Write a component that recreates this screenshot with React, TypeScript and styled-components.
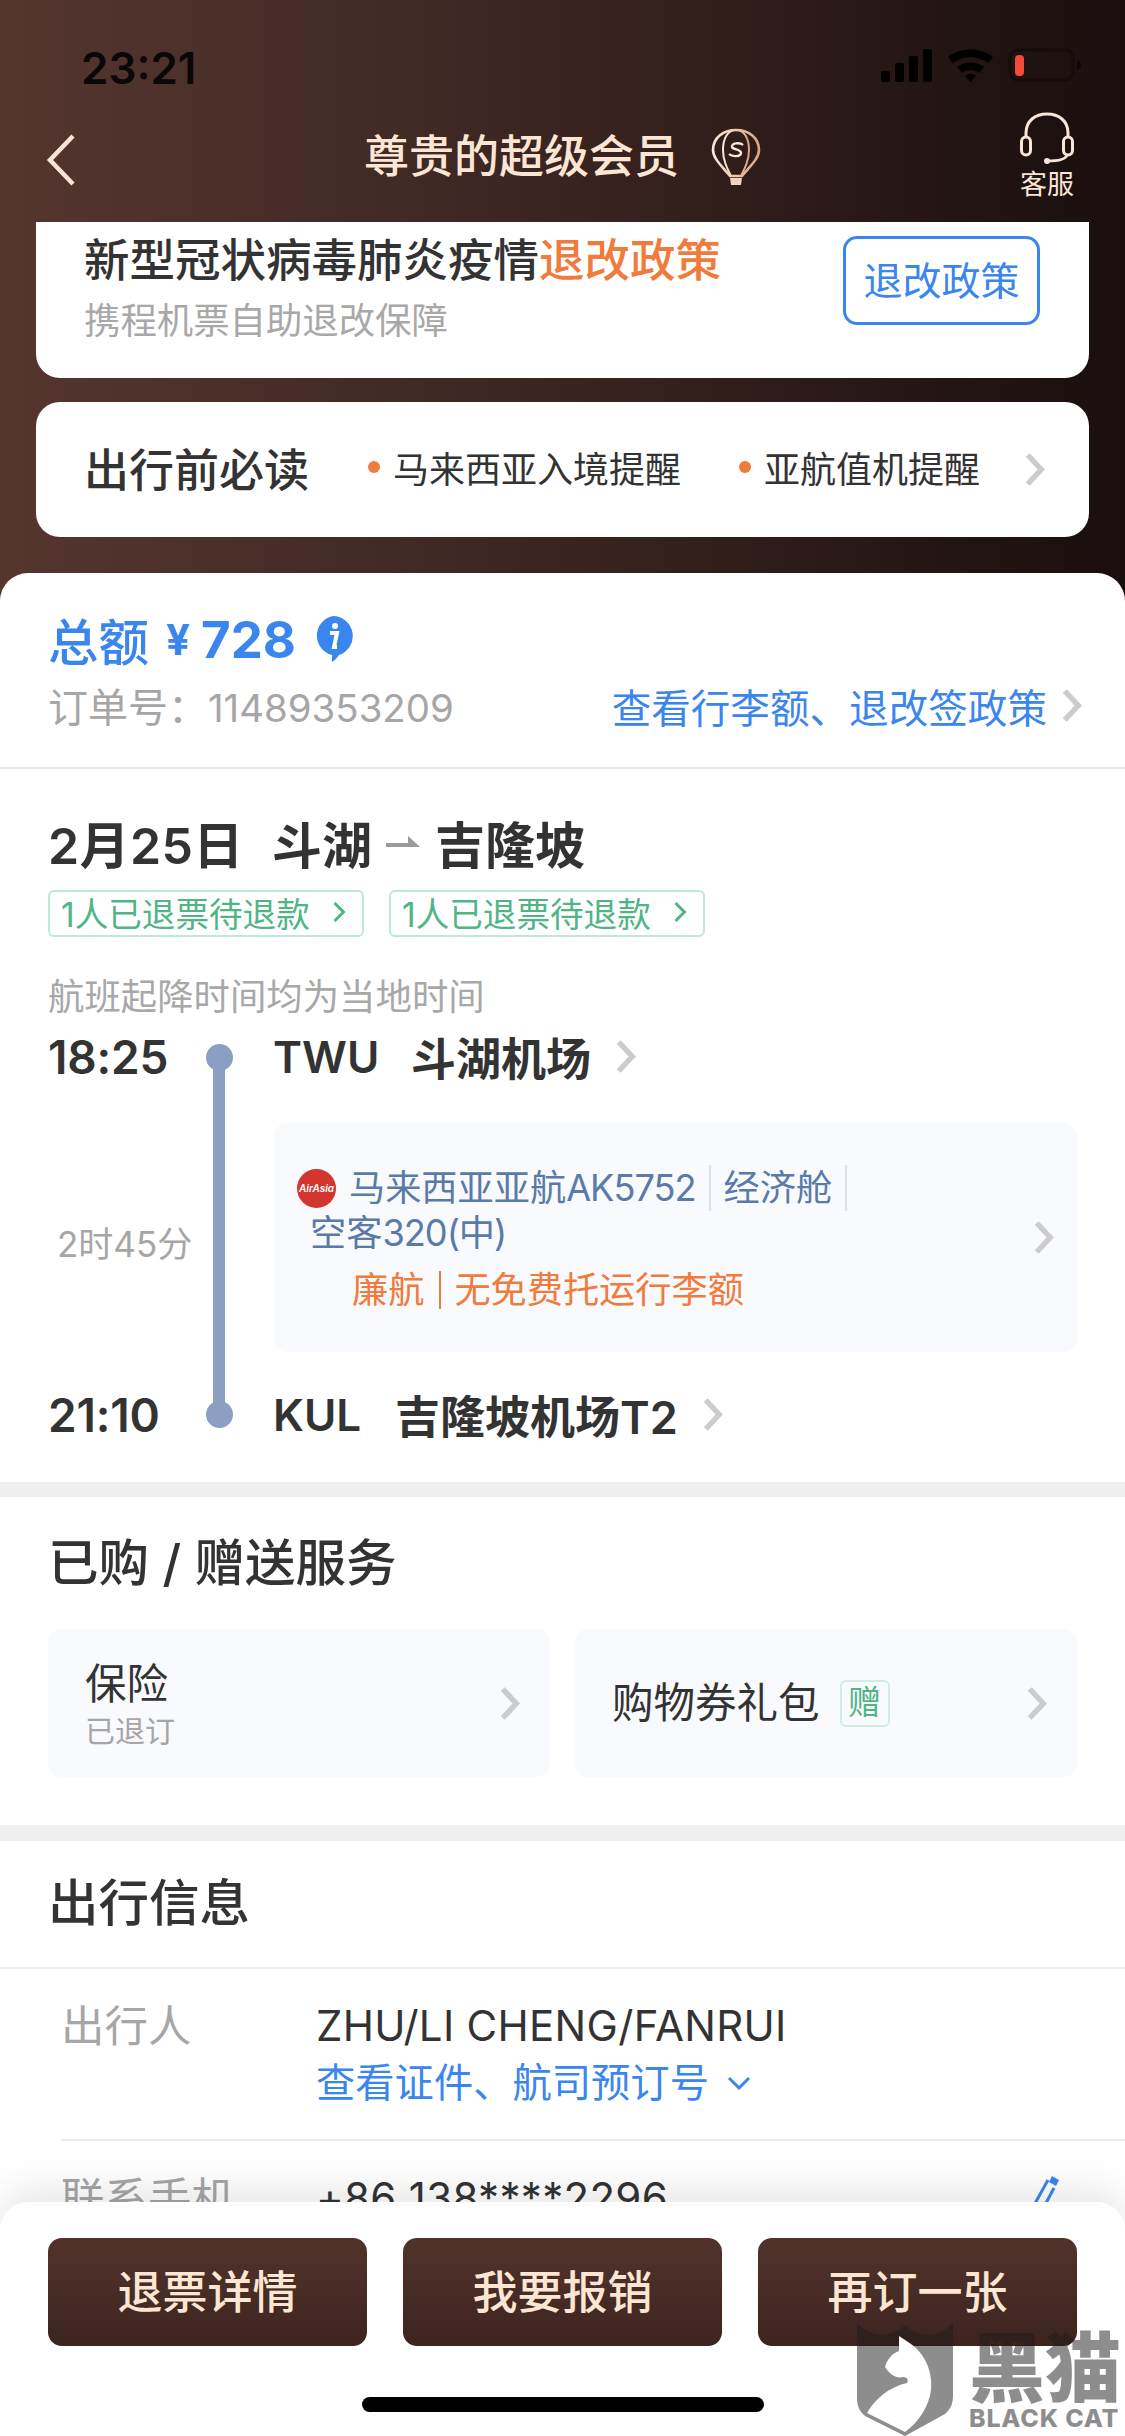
import React from "react";
import styled, { createGlobalStyle } from "styled-components";

const Global = createGlobalStyle`
  html, body { margin: 0; padding: 0; background: #fff; }
  * { box-sizing: border-box; }
  body { font-family: Inter, "Noto Sans CJK SC", sans-serif; color: #333; }
`;

const Page = styled.div`
  position: relative;
  width: 1125px;
  height: 2436px;
  overflow: hidden;
  background: linear-gradient(90deg, #55362f 0%, #3a2420 50%, #190e0e 100%) top / 100% 620px no-repeat, #fff;
`;
const StatusBar = styled.div`
  height: 100px;
  padding: 38px 43px 0 81px;
  display: flex;
  justify-content: space-between;
  align-items: flex-start;
`;
const Clock = styled.div`
  font-size: 44px;
  line-height: 60px;
  font-weight: 600;
  color: #0a0707;
  width: 122px;
`;
const StatusIcons = styled.svg`
  width: 201px;
  height: 50px;
  margin-top: 10px;
`;
const Nav = styled.div`
  height: 122px;
  padding: 12px 51px 0 46px;
  display: flex;
  align-items: flex-start;
  color: #fbe6d6;
`;
const BackIcon = styled.svg`
  width: 30px;
  height: 52px;
  margin-top: 22px;
`;
const NavCenter = styled.div`
  display: flex;
  align-items: center;
  gap: 32px;
  height: 70px;
  margin: 10px 0 0 288px;
`;
const NavTitle = styled.div`
  font-size: 45px;
  line-height: 70px;
  font-weight: 500;
  white-space: nowrap;
`;
const Support = styled.div`
  display: flex;
  flex-direction: column;
  align-items: center;
  width: 54px;
  margin-left: auto;
  font-size: 27px;
  line-height: 42px;
  white-space: nowrap;
`;
const Hero = styled.div`
  padding: 0 36px;
  display: flex;
  flex-direction: column;
  gap: 24px;
`;
const PolicyCard = styled.div`
  height: 156px;
  background: #fff;
  border-radius: 0 0 24px 24px;
  padding: 0 49px 0 48px;
  display: flex;
  justify-content: space-between;
  align-items: flex-start;
`;
const PolicyTitle = styled.div`
  font-size: 45.5px;
  line-height: 60px;
  margin-top: 9px;
  font-weight: 500;
  white-space: nowrap;
`;
const Orange = styled.span`
  color: #f07b3c;
`;
const PolicySub = styled.div`
  font-size: 36.4px;
  line-height: 50px;
  color: #a8a8a8;
  margin-top: 5px;
  white-space: nowrap;
`;
const PolicyButton = styled.div`
  width: 197px;
  height: 89px;
  margin-top: 14px;
  padding-bottom: 5px;
  border: 3px solid #3b86ee;
  border-radius: 14px;
  color: #3b86ee;
  font-size: 39px;
  display: flex;
  align-items: center;
  justify-content: center;
  white-space: nowrap;
`;
const NoticeCard = styled.div`
  height: 135px;
  background: #fff;
  border-radius: 24px;
  padding: 0 40px 0 48px;
  display: flex;
  align-items: center;
`;
const NoticeTitle = styled.div`
  font-size: 45px;
  font-weight: 500;
  width: 284px;
  padding-bottom: 5px;
  white-space: nowrap;
`;
const NoticeItem = styled.div<{ $w: number }>`
  width: ${(p) => p.$w}px;
  font-size: 36px;
  color: #333;
  display: flex;
  align-items: center;
  gap: 13px;
  padding-bottom: 5px;
  white-space: nowrap;
  &::before {
    content: "";
    width: 12px;
    height: 12px;
    border-radius: 50%;
    background: #f07b3c;
  }
`;
const ChevronSvg = styled.svg<{ $ml?: number }>`
  flex: none;
  margin-left: ${(p) => p.$ml ?? 0}px;
`;
const Sheet = styled.div`
  margin-top: 36px;
  background: #fff;
  border-radius: 28px 28px 0 0;
`;
const Summary = styled.div`
  height: 196px;
  padding: 36px 43px 0 48px;
  border-bottom: 2px solid #e9e9e9;
`;
const TotalRow = styled.div`
  height: 60px;
  display: flex;
  align-items: center;
  color: #3b86ee;
  font-size: 50px;
  font-weight: 600;
`;
const TotalLabel = styled.span`
  font-weight: 500;
  font-size: 50.5px;
  width: 118px;
`;
const Yen = styled.span`
  font-size: 42px;
  font-weight: 700;
  width: 35px;
`;
const Amount = styled.span`
  width: 105px;
  font-size: 51px;
  font-weight: 700;
`;
const InfoBadge = styled.svg`
  width: 42px;
  height: 48px;
  margin-left: 6px;
  flex: none;
`;
const OrderRow = styled.div`
  height: 50px;
  margin-top: 11px;
  display: flex;
  align-items: center;
  justify-content: space-between;
`;
const OrderNo = styled.div`
  font-size: 38.4px;
  color: #a6a6a6;
  white-space: nowrap;
`;
const OrderLabel = styled.span`
  font-size: 40px;
`;
const LinkText = styled.div`
  font-size: 39.6px;
  color: #3b86ee;
  white-space: nowrap;
  display: flex;
  align-items: center;
`;
const Flight = styled.div`
  padding: 41px 48px 37px 48px;
`;
const RouteTitle = styled.div`
  height: 63px;
  display: flex;
  align-items: center;
  font-size: 50px;
  font-weight: 600;
  white-space: nowrap;
`;
const RouteDate = styled.span`
  width: 224px;
  letter-spacing: 0.4px;
`;
const RouteArrow = styled.svg`
  width: 34px;
  height: 14px;
  margin: 3px 15px 0 14px;
`;
const Tags = styled.div`
  display: flex;
  gap: 25px;
  margin-top: 17px;
`;
const Tag = styled.div`
  width: 316px;
  height: 47px;
  border: 2px solid #bfe8d5;
  border-radius: 6px;
  padding: 0 16px 3px 11px;
  display: flex;
  align-items: center;
  justify-content: space-between;
  font-size: 33.6px;
  color: #4fb585;
  white-space: nowrap;
`;
const Note = styled.div`
  margin-top: 35px;
  font-size: 36.4px;
  line-height: 50px;
  color: #a8a8a8;
`;
const Timeline = styled.div`
  margin-top: 5px;
  display: grid;
  grid-template-columns: 145px 52px 1fr;
  grid-template-rows: 60px auto 60px;
`;
const TimeText = styled.div`
  font-size: 46px;
  font-weight: 600;
  line-height: 60px;
  letter-spacing: -0.2px;
`;
const Rail = styled.div`
  grid-column: 2;
  grid-row: 1 / 4;
  display: flex;
  flex-direction: column;
  align-items: center;
  padding: 17px 0;
`;
const RailDot = styled.div`
  width: 27px;
  height: 27px;
  flex: none;
  border-radius: 50%;
  background: #8a9fc2;
`;
const RailLine = styled.div`
  flex: 1;
  width: 12px;
  background: #8a9fc2;
  margin: -3px 0;
`;
const Airport = styled.div`
  grid-column: 3;
  padding: 0 0 2px 28px;
  display: flex;
  align-items: center;
  font-size: 45px;
  font-weight: 600;
  white-space: nowrap;
`;
const Code = styled.span<{ $w: number }>`
  width: ${(p) => p.$w}px;
  font-size: 44px;
  padding-top: 2px;
`;
const Duration = styled.div`
  grid-column: 1;
  grid-row: 2;
  align-self: center;
  padding: 10px 0 0 9px;
  font-size: 35px;
  color: #a6a6a6;
  white-space: nowrap;
`;
const SegmentWrap = styled.div`
  grid-column: 3;
  grid-row: 2;
  padding: 36px 0 33px 29px;
`;
const Segment = styled.div`
  height: 229px;
  background: #f9fafe;
  border-radius: 14px;
  padding: 0 23px;
  display: flex;
  align-items: center;
  justify-content: space-between;
`;
const SegmentBody = styled.div`
  align-self: flex-start;
  margin-top: 42px;
  font-size: 36.2px;
  line-height: 45px;
  color: #5a7aa8;
  width: 640px;
`;
const SegmentLine = styled.div`
  display: flex;
  align-items: center;
  white-space: nowrap;
`;
const LatinTight = styled.span`
  letter-spacing: -1px;
`;
const LogoSvg = styled.svg`
  width: 39px;
  height: 39px;
  margin-right: 13px;
  flex: none;
`;
const Pipe = styled.span`
  width: 2px;
  height: 46px;
  margin: 0 13px;
  background: #dde1e8;
`;
const Plane = styled.div`
  padding-left: 13px;
`;
const LowCost = styled.div`
  margin: 9px 0 0 55px;
  color: #f07b3c;
  white-space: nowrap;
  line-height: 50px;
  display: flex;
  align-items: center;
`;
const LowCostPipe = styled.span`
  width: 2px;
  height: 38px;
  margin: 0 13px 0 15px;
  background: #f07b3c;
`;
const Band = styled.div<{ $h: number }>`
  height: ${(p) => p.$h}px;
  background: #f0f0f0;
`;
const Services = styled.div`
  padding: 36px 48px 48px 48px;
`;
const SectionTitle = styled.div`
  font-size: 50.5px;
  line-height: 60px;
  font-weight: 500;
  white-space: nowrap;
`;
const ServiceGrid = styled.div`
  margin-top: 36px;
  display: grid;
  grid-template-columns: 502px 502px;
  gap: 25px;
`;
const ServiceCard = styled.div`
  height: 148px;
  background: #f9fafe;
  border-radius: 14px;
  padding: 0 30px 0 37px;
  display: flex;
  align-items: center;
  justify-content: space-between;
`;
const ServiceName = styled.div`
  font-size: 41.5px;
  line-height: 56px;
  display: flex;
  align-items: center;
`;
const ServiceSub = styled.div`
  font-size: 30px;
  line-height: 38px;
  color: #a6a6a6;
`;
const Gift = styled.span`
  width: 50px;
  height: 47px;
  margin-left: 20px;
  padding-bottom: 3px;
  border: 2px solid #cfeee0;
  border-radius: 6px;
  color: #4fb585;
  font-size: 33px;
  display: flex;
  align-items: center;
  justify-content: center;
`;
const TravelHead = styled.div`
  padding: 32px 48px 34px 48px;
  border-bottom: 2px solid #efefef;
`;
const InfoRow = styled.div<{ $divider?: boolean }>`
  margin-left: 61px;
  padding: ${(p) => (p.$divider ? "27px 0 29px" : "27px 65px 0 0")};
  display: grid;
  grid-template-columns: 255px 1fr auto;
  border-bottom: ${(p) => (p.$divider ? "2px solid #efefef" : "none")};
`;
const InfoLabel = styled.div`
  font-size: 43.5px;
  line-height: 60px;
  color: #a6a6a6;
`;
const InfoValue = styled.div`
  font-size: 42px;
  line-height: 60px;
  letter-spacing: 0.3px;
  white-space: nowrap;
`;
const InfoLink = styled.div`
  font-size: 39.3px;
  line-height: 54px;
  color: #3b86ee;
  display: flex;
  align-items: center;
  gap: 18px;
`;
const PenIcon = styled.svg`
  width: 36px;
  height: 46px;
  margin-top: 6px;
`;
const BottomBar = styled.div`
  position: absolute;
  left: 0;
  right: 0;
  top: 2202px;
  height: 234px;
  background: #fff;
  border-radius: 28px 28px 0 0;
  box-shadow: 0 -14px 36px rgba(0, 0, 0, 0.09);
  padding: 36px 48px 0 48px;
`;
const Buttons = styled.div`
  display: grid;
  grid-template-columns: repeat(3, 319px);
  justify-content: space-between;
`;
const ActionButton = styled.div`
  height: 108px;
  padding-bottom: 6px;
  border-radius: 14px;
  background: linear-gradient(180deg, #52332c, #3d241f);
  color: #fbe6d4;
  font-size: 45px;
  font-weight: 500;
  display: flex;
  align-items: center;
  justify-content: center;
`;
const HomeBar = styled.div`
  width: 402px;
  height: 15px;
  margin: 51px auto 0;
  border-radius: 8px;
  background: #000;
`;
const Watermark = styled.div`
  position: absolute;
  left: 857px;
  top: 2322px;
  width: 268px;
  height: 114px;
  display: flex;
  color: rgba(30, 28, 28, 0.5);
`;
const Shield = styled.svg`
  width: 96px;
  height: 114px;
  flex: none;
`;
const WatermarkText = styled.div`
  margin-left: 16px;
  display: flex;
  flex-direction: column;
  align-items: flex-start;
  font-weight: 900;
  white-space: nowrap;
`;
const WatermarkCn = styled.div`
  font-size: 76px;
  line-height: 72px;
  padding-top: 10px;
`;
const WatermarkEn = styled.div`
  font-size: 25px;
  line-height: 28px;
  letter-spacing: 0.8px;
  font-weight: 800;
`;

const Chevron = ({ w = 21, h = 33, color = "#cccccc", sw = 5.5, ml }: { w?: number; h?: number; color?: string; sw?: number; ml?: number }) => (
  <ChevronSvg $ml={ml} width={w} height={h} viewBox={`0 0 ${w} ${h}`} fill="none">
    <path d={`M${sw / 2 + 1} 2 L${w - sw / 2 - 1} ${h / 2} L${sw / 2 + 1} ${h - 2}`} stroke={color} strokeWidth={sw} />
  </ChevronSvg>
);

const Balloon = () => (
  <svg width="50" height="58" viewBox="0 0 50 58" fill="none" style={{ flex: "none" }}>
    <defs>
      <linearGradient id="bl" x1="0" x2="1" y1="0" y2="0">
        <stop offset="0" stopColor="#fbe9da" />
        <stop offset="1" stopColor="#dba581" />
      </linearGradient>
    </defs>
    <path d="M25 2C12 2 2 10 2 22c0 9 10 17 17 26h12c7-9 17-17 17-26C48 10 38 2 25 2Z" stroke="url(#bl)" strokeWidth="2.6" />
    <path d="M25 2c-8 0-13 8-13 20 0 10 4 18 8 26M25 2c8 0 13 8 13 20 0 10-4 18-8 26" stroke="url(#bl)" strokeWidth="2" />
    <path d="M32 17c-3-3-12-2-11 2 1 3 9 2 9 6 0 4-9 4-12 1" stroke="#fbe9da" strokeWidth="2.4" />
    <path d="M19 50h12l-1 7h-10z" fill="#f3d3bc" />
  </svg>
);

const Headset = () => (
  <svg width="54" height="52" viewBox="0 0 54 52" fill="none" style={{ flex: "none" }}>
    <path d="M6 26V21C6 9 15 2 27 2s21 7 21 19v5" stroke="#fbe6d6" strokeWidth="3" />
    <rect x="1.500" y="25" width="9" height="18" rx="4.500" stroke="#fbe6d6" strokeWidth="3" />
    <rect x="43.500" y="25" width="9" height="18" rx="4.500" stroke="#fbe6d6" strokeWidth="3" />
    <path d="M47 43c-1 4-6 6-20 6" stroke="#fbe6d6" strokeWidth="3" />
    <circle cx="27" cy="49" r="3" fill="#fbe6d6" />
  </svg>
);

export default function App() {
  return (
    <Page>
      <Global />
      <StatusBar>
        <Clock>23:21</Clock>
        <StatusIcons viewBox="0 0 201 50">
          <rect x="0" y="23" width="9" height="11" rx="2" fill="#000" />
          <rect x="14" y="15" width="9" height="19" rx="2" fill="#000" />
          <rect x="28" y="8" width="9" height="26" rx="2" fill="#000" />
          <rect x="42" y="1" width="9" height="33" rx="2" fill="#000" />
          <path d="M67 9C79-1 100-1 112 9l-5 6C97 7 82 7 72 15Z" fill="#000" />
          <path d="M76 19c8-6 19-6 27 0l-5 6c-5-4-12-4-17 0Z" fill="#000" />
          <path d="M84 28c4-3 7-3 11 0l-5.500 6Z" fill="#000" />
          <rect x="129" y="2" width="63" height="30" rx="8" fill="none" stroke="#140b0b" strokeWidth="3" />
          <path d="M196 12c3 1 4 3 4 5s-1 4-4 5Z" fill="#0c0707" />
          <rect x="134" y="7" width="9" height="21" rx="4" fill="#ee4b39" />
        </StatusIcons>
      </StatusBar>
      <Nav>
        <BackIcon viewBox="0 0 30 52" fill="none">
          <path d="M27 2L4 26l23 24" stroke="#fbe6d6" strokeWidth="4.500" />
        </BackIcon>
        <NavCenter>
          <NavTitle>尊贵的超级会员</NavTitle>
          <Balloon />
        </NavCenter>
        <Support>
          <Headset />
          <span>客服</span>
        </Support>
      </Nav>
      <Hero>
        <PolicyCard>
          <div>
            <PolicyTitle>
              新型冠状病毒肺炎疫情<Orange>退改政策</Orange>
            </PolicyTitle>
            <PolicySub>携程机票自助退改保障</PolicySub>
          </div>
          <PolicyButton>退改政策</PolicyButton>
        </PolicyCard>
        <NoticeCard>
          <NoticeTitle>出行前必读</NoticeTitle>
          <NoticeItem $w={371}>马来西亚入境提醒</NoticeItem>
          <NoticeItem $w={285}>亚航值机提醒</NoticeItem>
          <Chevron />
        </NoticeCard>
      </Hero>
      <Sheet>
        <Summary>
          <TotalRow>
            <TotalLabel>总额</TotalLabel>
            <Yen>¥</Yen>
            <Amount>728</Amount>
            <InfoBadge viewBox="0 0 42 48">
              <path d="M21 1a20 20 0 0 1 6 39c-2 3-4 5-7 7l0-7A20 20 0 0 1 21 1Z" fill="#3b86ee" />
              <circle cx="23" cy="11" r="3" fill="#fff" />
              <path d="M18 18h7l-3 14h3" stroke="#fff" strokeWidth="4" fill="none" />
            </InfoBadge>
          </TotalRow>
          <OrderRow>
            <OrderNo>
              <OrderLabel>订单号：</OrderLabel>11489353209
            </OrderNo>
            <LinkText>
              查看行李额、退改签政策
              <Chevron ml={14} />
            </LinkText>
          </OrderRow>
        </Summary>
        <Flight>
          <RouteTitle>
            <RouteDate>2月25日</RouteDate>
            斗湖
            <RouteArrow viewBox="0 0 34 14">
              <path d="M0 7h22V0l12 11H0Z" fill="#9a9a9a" />
            </RouteArrow>
            吉隆坡
          </RouteTitle>
          <Tags>
            <Tag>
              1人已退票待退款
              <Chevron w={14} h={22} color="#4fb585" sw={3} />
            </Tag>
            <Tag>
              1人已退票待退款
              <Chevron w={14} h={22} color="#4fb585" sw={3} />
            </Tag>
          </Tags>
          <Note>航班起降时间均为当地时间</Note>
          <Timeline>
            <TimeText>18:25</TimeText>
            <Rail>
              <RailDot />
              <RailLine />
              <RailDot />
            </Rail>
            <Airport>
              <Code $w={138}>TWU</Code>
              斗湖机场
              <Chevron ml={24} />
            </Airport>
            <Duration>2时45分</Duration>
            <SegmentWrap>
              <Segment>
                <SegmentBody>
                  <SegmentLine>
                    <LogoSvg viewBox="0 0 39 39">
                      <circle cx="19.500" cy="19.500" r="19.500" fill="#d2352e" />
                      <text x="19.500" y="23" textAnchor="middle" fontSize="10" fontStyle="italic" fontWeight="600" fill="#fff" fontFamily="Inter, sans-serif">AirAsia</text>
                    </LogoSvg>
                    马来西亚亚航<LatinTight>AK5752</LatinTight>
                    <Pipe />
                    经济舱
                    <Pipe />
                  </SegmentLine>
                  <Plane>
                    空客<LatinTight>320(中)</LatinTight>
                  </Plane>
                  <LowCost>
                    廉航
                    <LowCostPipe />
                    无免费托运行李额
                  </LowCost>
                </SegmentBody>
                <Chevron />
              </Segment>
            </SegmentWrap>
            <TimeText>21:10</TimeText>
            <Airport>
              <Code $w={122}>KUL</Code>
              吉隆坡机场T2
              <Chevron ml={24} />
            </Airport>
          </Timeline>
        </Flight>
        <Band $h={15} />
        <Services>
          <SectionTitle>已购 / 赠送服务</SectionTitle>
          <ServiceGrid>
            <ServiceCard>
              <div>
                <ServiceName>保险</ServiceName>
                <ServiceSub>已退订</ServiceSub>
              </div>
              <Chevron />
            </ServiceCard>
            <ServiceCard>
              <ServiceName>
                购物券礼包<Gift>赠</Gift>
              </ServiceName>
              <Chevron />
            </ServiceCard>
          </ServiceGrid>
        </Services>
        <Band $h={16} />
        <TravelHead>
          <SectionTitle>出行信息</SectionTitle>
        </TravelHead>
        <InfoRow $divider>
          <InfoLabel>出行人</InfoLabel>
          <div>
            <InfoValue>ZHU/LI CHENG/FANRUI</InfoValue>
            <InfoLink>
              查看证件、航司预订号
              <svg width="24" height="14" viewBox="0 0 24 14" fill="none">
                <path d="M2 2l10 10L22 2" stroke="#3b86ee" strokeWidth="3" />
              </svg>
            </InfoLink>
          </div>
        </InfoRow>
        <InfoRow>
          <InfoLabel>联系手机</InfoLabel>
          <InfoValue>+86 138****2296</InfoValue>
          <PenIcon viewBox="0 0 36 46" fill="none">
            <path d="M4 42L24 6" stroke="#3b86ee" strokeWidth="3" />
            <path d="M14 44L30 14" stroke="#3b86ee" strokeWidth="3" />
            <path d="M28 2l7 4-3 6-7-4Z" fill="#3b86ee" />
          </PenIcon>
        </InfoRow>
      </Sheet>
      <BottomBar>
        <Buttons>
          <ActionButton>退票详情</ActionButton>
          <ActionButton>我要报销</ActionButton>
          <ActionButton>再订一张</ActionButton>
        </Buttons>
        <HomeBar />
      </BottomBar>
      <Watermark>
        <Shield viewBox="0 0 96 114">
          <path fillRule="evenodd" fill="currentColor" d="M0 1c8 8 16 12 24 12S42 9 48 3c6 6 16 10 24 10s16-4 24-12v72c0 8-2 14-8 19L48 114 8 94C2 89 0 83 0 75Z" />
          <path fill="#fff" d="M42 14l12 8c14 10 22 28 20 46-2 16-12 32-26 42L10 91c8-14 22-26 40-30 2-3 0-6-4-6-8 2-14-4-18-10 2-8 8-14 14-16Z" />
        </Shield>
        <WatermarkText>
          <WatermarkCn>黑猫</WatermarkCn>
          <WatermarkEn>BLACK CAT</WatermarkEn>
        </WatermarkText>
      </Watermark>
    </Page>
  );
}
